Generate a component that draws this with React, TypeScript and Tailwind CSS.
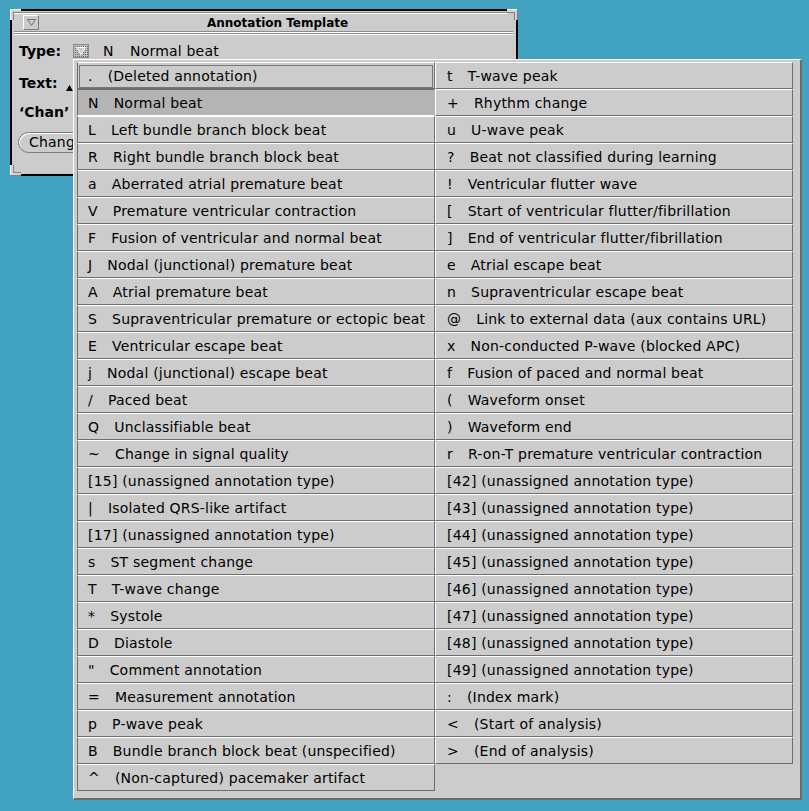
import React from "react";

type Item = { code: string; label: string };

const left: Item[] = [
  { code: ".", label: "(Deleted annotation)" },
  { code: "N", label: "Normal beat" },
  { code: "L", label: "Left bundle branch block beat" },
  { code: "R", label: "Right bundle branch block beat" },
  { code: "a", label: "Aberrated atrial premature beat" },
  { code: "V", label: "Premature ventricular contraction" },
  { code: "F", label: "Fusion of ventricular and normal beat" },
  { code: "J", label: "Nodal (junctional) premature beat" },
  { code: "A", label: "Atrial premature beat" },
  { code: "S", label: "Supraventricular premature or ectopic beat" },
  { code: "E", label: "Ventricular escape beat" },
  { code: "j", label: "Nodal (junctional) escape beat" },
  { code: "/", label: "Paced beat" },
  { code: "Q", label: "Unclassifiable beat" },
  { code: "~", label: "Change in signal quality" },
  { code: "", label: "[15] (unassigned annotation type)" },
  { code: "|", label: "Isolated QRS-like artifact" },
  { code: "", label: "[17] (unassigned annotation type)" },
  { code: "s", label: "ST segment change" },
  { code: "T", label: "T-wave change" },
  { code: "*", label: "Systole" },
  { code: "D", label: "Diastole" },
  { code: '"', label: "Comment annotation" },
  { code: "=", label: "Measurement annotation" },
  { code: "p", label: "P-wave peak" },
  { code: "B", label: "Bundle branch block beat (unspecified)" },
  { code: "^", label: "(Non-captured) pacemaker artifact" },
];

const right: Item[] = [
  { code: "t", label: "T-wave peak" },
  { code: "+", label: "Rhythm change" },
  { code: "u", label: "U-wave peak" },
  { code: "?", label: "Beat not classified during learning" },
  { code: "!", label: "Ventricular flutter wave" },
  { code: "[", label: "Start of ventricular flutter/fibrillation" },
  { code: "]", label: "End of ventricular flutter/fibrillation" },
  { code: "e", label: "Atrial escape beat" },
  { code: "n", label: "Supraventricular escape beat" },
  { code: "@", label: "Link to external data (aux contains URL)" },
  { code: "x", label: "Non-conducted P-wave (blocked APC)" },
  { code: "f", label: "Fusion of paced and normal beat" },
  { code: "(", label: "Waveform onset" },
  { code: ")", label: "Waveform end" },
  { code: "r", label: "R-on-T premature ventricular contraction" },
  { code: "", label: "[42] (unassigned annotation type)" },
  { code: "", label: "[43] (unassigned annotation type)" },
  { code: "", label: "[44] (unassigned annotation type)" },
  { code: "", label: "[45] (unassigned annotation type)" },
  { code: "", label: "[46] (unassigned annotation type)" },
  { code: "", label: "[47] (unassigned annotation type)" },
  { code: "", label: "[48] (unassigned annotation type)" },
  { code: "", label: "[49] (unassigned annotation type)" },
  { code: ":", label: "(Index mark)" },
  { code: "<", label: "(Start of analysis)" },
  { code: ">", label: "(End of analysis)" },
];

function ItemText({ item }: { item: Item }) {
  return (
    <span className="whitespace-pre">
      {item.code && <span>{item.code}</span>}
      <span className={item.code ? "ml-[15px]" : ""}>{item.label}</span>
    </span>
  );
}

function Cell({ item, col, index }: { item: Item; col: "l" | "r"; index: number }) {
  const side = col === "l" ? "border-l-[#6e6e6e]" : "border-l-white";
  if (col === "l" && index === 0) {
    // default item, boxed
    return (
      <div className="h-[27px] flex border-t border-b border-l border-r border-t-white border-b-[#6e6e6e] border-l-[#6e6e6e] border-r-[#6e6e6e]">
        <div className="flex-1 mt-[2px] mx-[1px] flex items-center pl-[8px] border border-[#777777]">
          <ItemText item={item} />
        </div>
      </div>
    );
  }
  if (col === "l" && index === 1) {
    // current value, pressed look
    return (
      <div className="h-[27px] flex items-center pl-[10px] pt-[2px] bg-[#b4b4b4] border-t border-b border-l border-r border-t-[#6e6e6e] border-b-white border-l-[#6e6e6e] border-r-[#b4b4b4]">
        <ItemText item={item} />
      </div>
    );
  }
  return (
    <div
      className={`h-[27px] flex items-center pt-[2px] ${col === "l" ? "pl-[10px]" : "pl-[11px]"} border-t border-b border-l border-r border-t-white border-b-[#6e6e6e] border-r-[#6e6e6e] ${side}`}
    >
      <ItemText item={item} />
    </div>
  );
}

function Corner({ className, d, light, dark }: { className: string; d: string; light: string; dark: string }) {
  return (
    <svg className={`absolute ${className}`} width="11" height="11" viewBox="0 0 11 11">
      <path d={d} fill="#d2d2d2" />
      <path d={light} stroke="#ffffff" strokeWidth="1" fill="none" />
      <path d={dark} stroke="#808080" strokeWidth="1" fill="none" />
    </svg>
  );
}

export default function App() {
  return (
    <div className="relative w-full h-[811px] bg-[#41a2c2] overflow-hidden font-['DejaVu_Sans',sans-serif] text-black">
      {/* Base window: Annotation Template */}
      <div className="absolute left-[10px] top-[9px] w-[508px] h-[167px] border-2 border-black bg-[#cccccc]">
        <Corner className="-left-[2px] -top-[2px]" d="M0 0H11V3H3V11H0Z" light="M0.5 11V0.5H11" dark="M11 3.5H3.5V11" />
        <Corner className="-right-[2px] -top-[2px]" d="M0 0H11V11H8V3H0Z" light="M0 0.5H10.5" dark="M0 3.5H7.5V11M10.5 0V11" />
        <Corner className="-left-[2px] -bottom-[2px]" d="M0 0H3V8H11V11H0Z" light="M0.5 0V10.5" dark="M3.5 0V7.5H11M0 10.5H11" />

        {/* title bar */}
        <div className="mt-[1px] ml-[1px] mr-[9px] h-[1px] bg-[#8c8c8c]" />
        <div className="ml-[1px] mr-[9px] h-[1px] bg-white" />
        <div className="h-[17px] flex items-center">
          <div className="ml-[11px] w-[16px] h-[15px] border border-t-white border-l-white border-r-[#7a7a7a] border-b-[#7a7a7a] flex items-center justify-center">
            <svg width="9" height="7" viewBox="0 0 9 7">
              <path d="M0.5 0.5H8.5L4.5 6.5Z" fill="none" stroke="#6e6e6e" strokeWidth="1" />
            </svg>
          </div>
          <span className="ml-[168px] pt-[1px] text-[12px] font-bold">Annotation Template</span>
        </div>
        <div className="ml-[2px] mr-[3px] h-[1px] bg-[#8c8c8c]" />
        <div className="ml-[2px] mr-[3px] h-[1px] bg-white" />
        <div className="ml-[2px] mr-[3px] h-[1px] bg-[#8c8c8c]" />
        <div className="ml-[2px] mr-[3px] h-[1px] bg-white" />

        {/* body */}
        <div className="flex flex-col pl-[7px] text-[14px]">
          <div className="mt-[5px] h-[22px] flex items-center">
            <span className="font-bold w-[54px]">Type:</span>
            <svg width="16" height="14" viewBox="0 0 16 14">
              <defs>
                <pattern id="stip" width="2" height="2" patternUnits="userSpaceOnUse">
                  <rect width="2" height="2" fill="#bdbdbd" />
                  <rect width="1" height="1" fill="#6a6a6a" />
                </pattern>
              </defs>
              <rect x="0.5" y="0.5" width="15" height="13" fill="url(#stip)" stroke="#8a8a8a" />
              <path d="M3.5 3.5H12.5L8 10.5Z" fill="#cccccc" stroke="#ffffff" strokeWidth="1" />
            </svg>
            <span className="ml-[14px] w-[27px]">N</span>
            <span className="tracking-[0.2px]">Normal beat</span>
          </div>
          <div className="mt-[10px] h-[22px] flex items-center">
            <span className="font-bold w-[47px]">Text:</span>
            <svg className="mt-[10px]" width="7" height="6" viewBox="0 0 7 6">
              <path d="M3.5 0L7 6H0Z" fill="#000" />
            </svg>
          </div>
          <div className="mt-[7px] h-[22px] w-[54px] overflow-hidden flex items-center">
            <span className="font-bold whitespace-nowrap">‘Chan’ field:</span>
          </div>
          <div className="mt-[9px] -ml-[1px] w-[55px] overflow-hidden">
            <div className="h-[21px] w-[120px] rounded-full border border-[#7a7a7a] shadow-[inset_1px_1px_0_#ffffff] flex items-center pl-[10px]">
              <span className="tracking-[0.2px] whitespace-nowrap">Change</span>
            </div>
          </div>
        </div>
      </div>

      {/* Popup menu */}
      <div className="absolute left-[73px] top-[59px] w-[729px] h-[741px] bg-[#cccccc] border-t border-l border-t-white border-l-white border-r-2 border-b-2 border-r-[#6b6b6b] border-b-[#6b6b6b] pl-[3px] pt-[2px] flex items-start text-[14px] tracking-[0.2px]">
        <div className="w-[358px] flex flex-col">
          {left.map((item, i) => (
            <Cell key={i} item={item} col="l" index={i} />
          ))}
        </div>
        <div className="w-[358px] flex flex-col">
          {right.map((item, i) => (
            <Cell key={i} item={item} col="r" index={i} />
          ))}
        </div>
      </div>
    </div>
  );
}
